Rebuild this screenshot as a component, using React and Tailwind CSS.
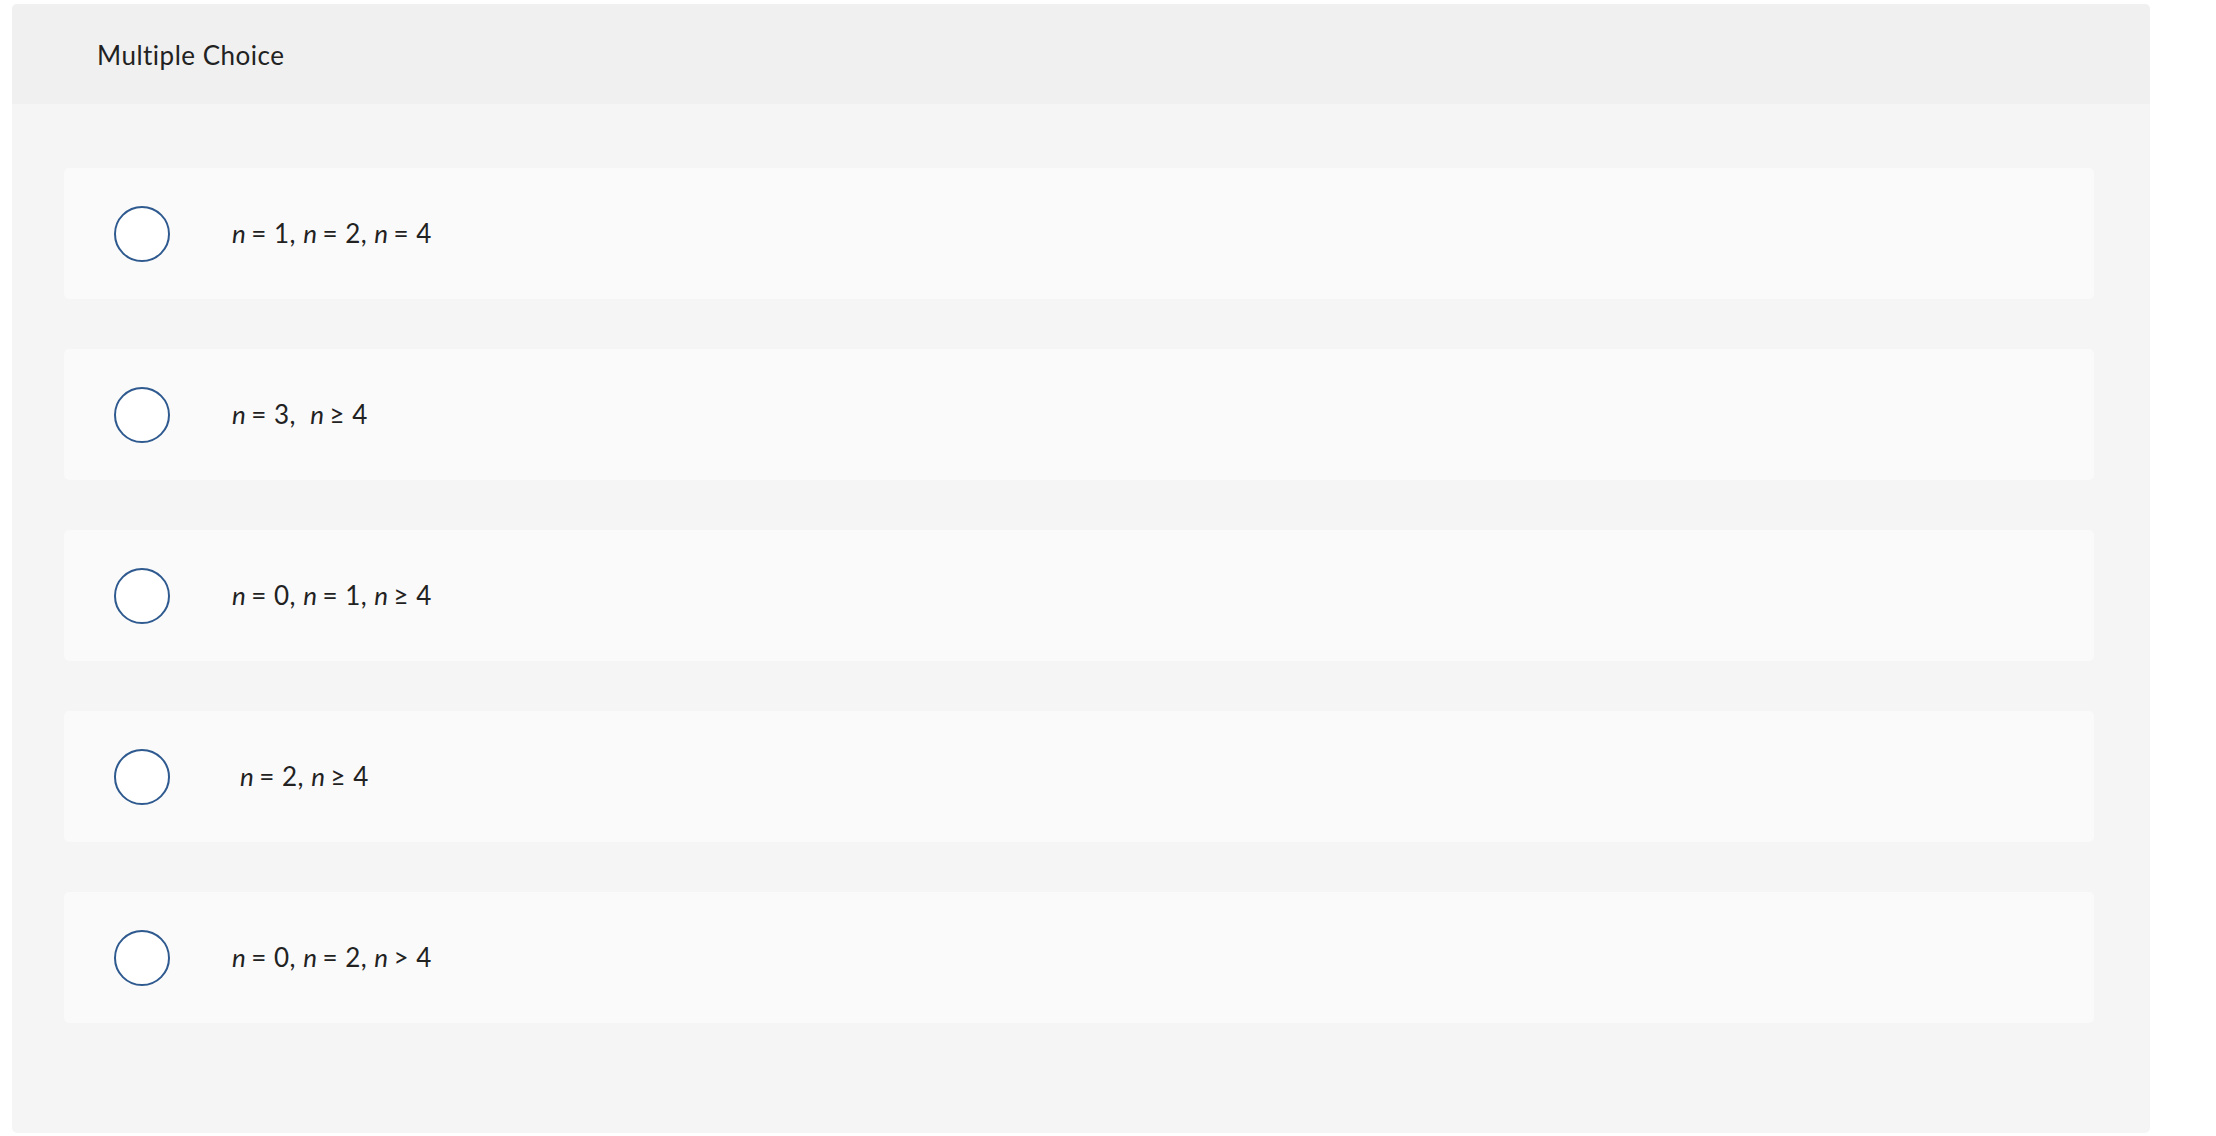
const options = [
  { id: 1, parts: [["n", "= 1, "], ["n", "= 2, "], ["n", "= 4"]] },
  { id: 2, parts: [["n", "= 3,\u00a0\u00a0"], ["n", "≥ 4"]] },
  { id: 3, parts: [["n", "= 0, "], ["n", "= 1, "], ["n", "≥ 4"]] },
  { id: 4, parts: [["n", "= 2, "], ["n", "≥ 4"]], indent: true },
  { id: 5, parts: [["n", "= 0, "], ["n", "= 2, "], ["n", "> 4"]] },
];

function MathText({ parts }) {
  return (
    <span>
      {parts.map(([v, rest], i) => (
        <span key={i}>
          <i className="mr-[5px]">{v}</i>
          {rest}
        </span>
      ))}
    </span>
  );
}

export default function App() {
  return (
    <div
      className="w-full min-h-[1136px] bg-white pt-[4px] pl-[12px] [font-variant-ligatures:none]"
      style={{ fontFamily: "Lato, 'Open Sans', sans-serif" }}
    >
      <div className="w-[2138px] h-[1129px] rounded-[5px] overflow-hidden bg-[#f5f5f5] flex flex-col">
        <div className="h-[100px] bg-[#f0f0f0] flex items-center pl-[85px] pt-[3px]">
          <h1 className="text-[26px] tracking-[0.5px] text-[#222] font-normal">Multiple Choice</h1>
        </div>
        <div className="pt-[64px] pl-[52px] flex flex-col gap-[50px]">
          {options.map((opt) => (
            <label
              key={opt.id}
              className="w-[2030px] h-[131px] bg-[#fafafa] rounded-[5px] flex items-center cursor-pointer"
            >
              <span className="ml-[50px] w-[56px] h-[56px] rounded-full border-2 border-[#2f5a8f] bg-white shrink-0" />
              <span
                className={`text-[26px] tracking-[0.5px] text-[#222] ${
                  opt.indent ? "ml-[70px]" : "ml-[62px]"
                }`}
              >
                <MathText parts={opt.parts} />
              </span>
            </label>
          ))}
        </div>
      </div>
    </div>
  );
}
